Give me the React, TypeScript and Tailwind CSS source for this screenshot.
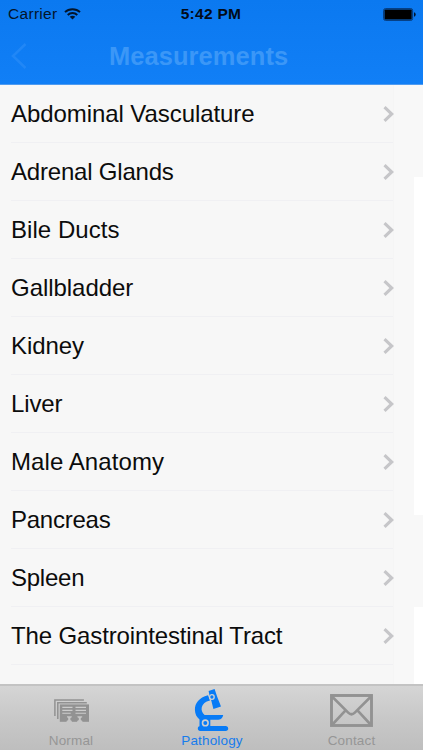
import type { ReactNode } from "react";

type Organ = { name: string; tracking: string };

type Tab = {
  label: string;
  active?: boolean;
  icon: ReactNode;
};

const organs: Organ[] = [
  { name: "Abdominal Vasculature", tracking: "tracking-[-0.07px]" },
  { name: "Adrenal Glands", tracking: "tracking-[-0.2px]" },
  { name: "Bile Ducts", tracking: "tracking-[0.04px]" },
  { name: "Gallbladder", tracking: "tracking-[-0.04px]" },
  { name: "Kidney", tracking: "tracking-[-0.1px]" },
  { name: "Liver", tracking: "tracking-[-0.12px]" },
  { name: "Male Anatomy", tracking: "tracking-[0.08px]" },
  { name: "Pancreas", tracking: "tracking-[-0.25px]" },
  { name: "Spleen", tracking: "tracking-[-0.25px]" },
  { name: "The Gastrointestinal Tract", tracking: "tracking-[-0.13px]" },
];

function WifiIcon() {
  return (
    <svg width="17" height="12" viewBox="0 0 17 12" fill="none" stroke="#03152b" strokeWidth="1.9">
      <path d="M1 4.2C5 0.2 12 0.2 16 4.2" />
      <path d="M3.7 7C6.4 4.3 10.6 4.3 13.3 7" />
      <path d="M8.5 11.6 5.7 8.8C7.2 7.4 9.8 7.4 11.3 8.8Z" fill="#03152b" stroke="none" />
    </svg>
  );
}

function BatteryIcon() {
  return (
    <svg width="33" height="13" viewBox="0 0 33 13">
      <rect x="0.6" y="0.6" width="29" height="11.8" rx="1.8" fill="none" stroke="#063a78" strokeWidth="1" />
      <rect x="1.5" y="1.6" width="27.2" height="9.8" rx="0.6" fill="#000" />
      <path d="M31 4.3q1.7.4 1.7 2.2t-1.7 2.2z" fill="#03152b" />
    </svg>
  );
}

function SlidesIcon() {
  return (
    <svg className="ml-0.5" width="36" height="24" viewBox="0 0 36 24">
      <path d="M.9 17V.9h29M3.8 20V3.7h29" fill="none" stroke="#929292" strokeWidth="1.5" />
      <path d="M5.8 5.4H35v17.4H5.8z" fill="#929292" />
      <path
        d="M8.3 8.4h10.2M21.5 8.4H32M8.3 11.4h10.2M21.5 11.4H32M8.3 14.3h8.4M21.5 14.3H32"
        stroke="#cccccc"
        strokeWidth="1.1"
        fill="none"
      />
      <path
        d="M13 17.3h4.8v1l-1.4.8v2l1.4.9v1.2h-5.2V22l1.6-.9v-2l-1.2-.8zM23.4 17.3h4.8v1l-1.4.8v2l1.6.9v1.2h-5.2V22l1.6-.9v-2l-1.4-.8z"
        fill="#c6c6c6"
      />
    </svg>
  );
}

function MicroscopeIcon() {
  return (
    <svg className="-ml-0.5" width="35" height="43" viewBox="0 0 35 43" fill="#087bf6">
      <path d="M14.6 1.9 20.6 0l2.5 7.6 3.9 10-7.6 2.5-2-8.2-1.6-4.2z" />
      <path d="M14 6.3C5 8.6.8 14.4.9 20.8c.1 4.2 1.8 7.6 4.6 9.6v6.8c-1.2.2-1.7 1.2-1.7 2.4 0 1.6 1 2.5 2.4 2.5h25.4c1.7 0 2.6-1 2.6-2.5s-1-2.6-2.6-2.6H16.3v-6.2h8.2c2.8-.5 4.3-2 4.7-4.7H10.6C5.7 22.2 6.4 13.5 16 11.6z" />
      <circle cx="17.9" cy="8" r="2.3" stroke="#d2d2d2" strokeWidth="1.3" />
      <circle cx="11.3" cy="33.9" r="2.8" stroke="#cecece" strokeWidth="1.6" />
    </svg>
  );
}

function MailIcon() {
  return (
    <svg width="43" height="33" viewBox="0 0 43 33" fill="none" stroke="#929292">
      <rect x="1.5" y="1.5" width="40" height="30" strokeWidth="2.9" />
      <path d="M2 2.5 18.2 18.6q3.3 3.3 6.6 0L41 2.5M2 31 15.3 16.7M41 31 27.7 16.7" strokeWidth="2.6" />
    </svg>
  );
}

const tabs: Tab[] = [
  { label: "Normal", icon: <SlidesIcon /> },
  { label: "Pathology", active: true, icon: <MicroscopeIcon /> },
  { label: "Contact", icon: <MailIcon /> },
];

export default function App() {
  return (
    <div className="flex h-[750px] w-[423px] flex-col overflow-hidden bg-[#f8f8f8] font-['Liberation_Sans',sans-serif]">
      {/* Status bar + navigation bar */}
      <header className="h-[85px] shrink-0 border-b border-[#4f9bf0] bg-linear-to-b from-[#0b79f0] to-[#117ff6]">
        <div className="grid h-7 grid-cols-3 items-center pr-[7px] pl-2 text-[15.5px] text-[#03152b]">
          <div className="flex items-center gap-[7px]">
            <span className="tracking-[0.3px]">Carrier</span>
            <WifiIcon />
          </div>
          <span className="-ml-0.5 text-center font-bold tracking-[0.3px] text-[#020b18]">5:42 PM</span>
          <div className="flex justify-end">
            <BatteryIcon />
          </div>
        </div>
        <div className="flex h-14 items-center">
          <svg className="ml-[11px]" width="16" height="26" viewBox="0 0 16 26" fill="none" stroke="#2187f6" strokeWidth="2.5">
            <path d="M14.5 1 2 13l12.5 12" />
          </svg>
          <h1 className="ml-[82px] text-[25.5px] font-bold tracking-[0.05px] text-[#3b97f7]">Measurements</h1>
        </div>
      </header>

      <main className="flex h-[599px] shrink-0 overflow-hidden">
        <ul className="w-[394px] border-r border-[#f5f5f5] bg-[#f7f7f7]">
          {organs.map((organ) => (
            <li key={organ.name} className="flex h-[58.05px] items-center justify-between pl-[11px]">
              <div className="flex h-full flex-1 items-center justify-between border-b border-[#f0f0f3]">
                <span className={`text-[24px] whitespace-nowrap text-[#0c0c0c] ${organ.tracking}`}>{organ.name}</span>
                <svg className="-mr-px" width="11" height="16" viewBox="0 0 11 16" fill="none" stroke="#c6c6c9" strokeWidth="3.1">
                  <path d="M1.5 1.2 8.7 8l-7.2 6.8" />
                </svg>
              </div>
            </li>
          ))}
        </ul>
        {/* Edge of the detail view behind the list */}
        <div className="flex flex-1 flex-col items-end gap-[92px] pt-[92px]">
          <div className="h-[338px] w-[9px] shrink-0 bg-white" />
          <div className="w-[9px] flex-1 bg-white" />
        </div>
      </main>

      <nav className="grid h-[66px] shrink-0 grid-cols-[142px_140px_139px] border-t-2 border-[#c3c3c3] bg-linear-to-b from-[#d5d5d5] via-[#c8c8c8] via-50% to-[#bebebe]">
        {tabs.map((tab) => (
          <div key={tab.label} className="flex flex-col items-center">
            <div className="flex h-[46px] items-center pt-[3px]">{tab.icon}</div>
            <span className={`text-[13.5px] leading-[18px] tracking-[0.15px] ${tab.active ? "text-[#177cec]" : "text-[#969696]"}`}>
              {tab.label}
            </span>
          </div>
        ))}
      </nav>
    </div>
  );
}
